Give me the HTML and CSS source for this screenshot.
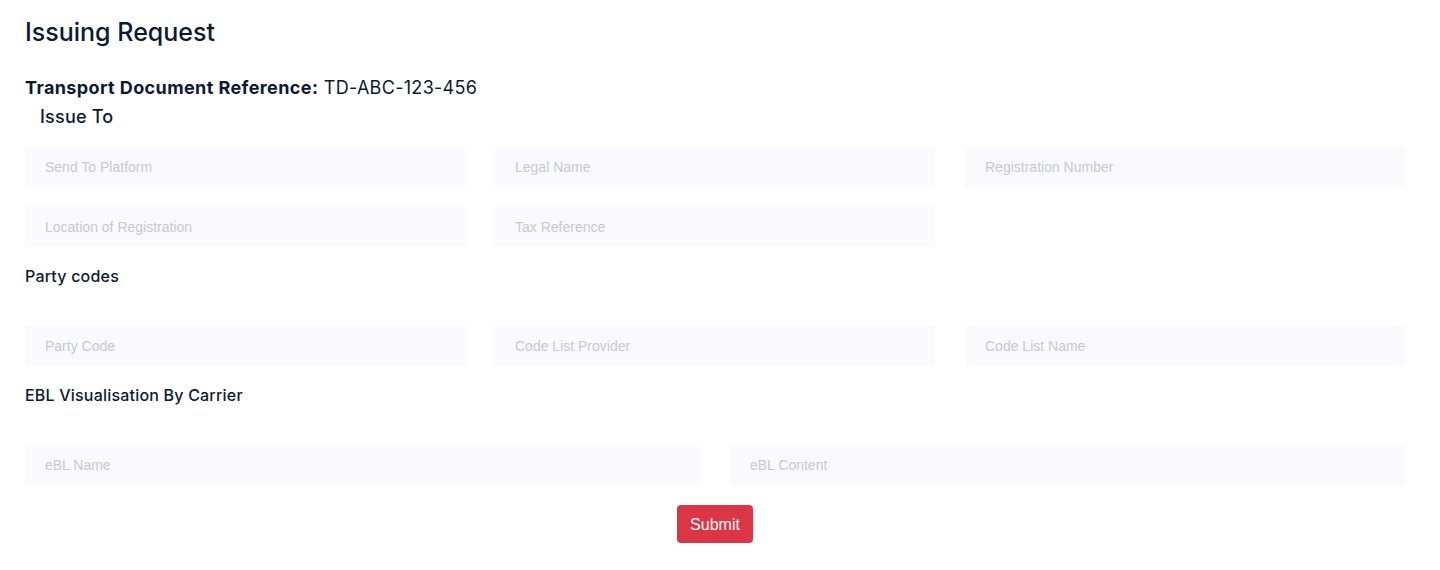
FILE: index.html
```html
<!DOCTYPE html>
<html lang="en">
<head>
<meta charset="utf-8">
<title>Issuing Request</title>
<link rel="stylesheet" href="styles.css">
</head>
<body>
<main class="page">
  <h1 class="title">Issuing Request</h1>
  <p class="ref"><strong>Transport Document Reference:</strong> TD-ABC-123-456</p>
  <h2 class="issue-to">Issue To</h2>
  <div class="grid three">
    <input class="field" placeholder="Send To Platform">
    <input class="field" placeholder="Legal Name">
    <input class="field" placeholder="Registration Number">
    <input class="field" placeholder="Location of Registration">
    <input class="field" placeholder="Tax Reference">
  </div>
  <h3 class="section">Party codes</h3>
  <div class="grid three spaced">
    <input class="field" placeholder="Party Code">
    <input class="field" placeholder="Code List Provider">
    <input class="field" placeholder="Code List Name">
  </div>
  <h3 class="section">EBL Visualisation By Carrier</h3>
  <div class="grid two spaced">
    <input class="field" placeholder="eBL Name">
    <input class="field" placeholder="eBL Content">
  </div>
  <div class="actions">
    <button class="btn-submit" type="button">Submit</button>
  </div>
</main>
</body>
</html>
```
FILE: styles.css
```css
* { box-sizing: border-box; }
html, body { margin: 0; background: #fff; }
body {
  font-family: "Inter", "Noto Sans", sans-serif;
  color: #0b1a33;
}
.page {
  padding: 16px 35px 0 25px;
}
.title {
  margin: 0;
  font-size: 25px;
  line-height: 32px;
  font-weight: 500;
}
.ref {
  margin: 28px 0 0;
  font-size: 18px;
  line-height: 24px;
  font-weight: 400;
  letter-spacing: 0.3px;
}
.ref strong { font-weight: 700; letter-spacing: 0.4px; }
.issue-to {
  margin: 5px 0 0;
  padding-left: 15px;
  font-size: 18px;
  line-height: 24px;
  font-weight: 500;
  letter-spacing: 0.2px;
}
.grid {
  display: grid;
  column-gap: 30px;
  row-gap: 20px;
  margin-top: 18px;
}
.grid.three { grid-template-columns: repeat(3, 1fr); }
.grid.two { grid-template-columns: repeat(2, 1fr); }
.grid.spaced { margin-top: 38px; }
.field {
  height: 40px;
  border: 0;
  outline: none;
  background: #f9f9fe;
  padding: 0 20px;
  font-family: "Liberation Sans", Arial, sans-serif;
  font-size: 14px;
  color: #333;
}
.field::placeholder { color: #c9c9cf; }
.section {
  margin: 17px 0 0;
  font-size: 16px;
  line-height: 24px;
  font-weight: 500;
  letter-spacing: 0.2px;
}
.actions {
  display: flex;
  justify-content: center;
  margin-top: 20px;
}
.btn-submit {
  height: 38px;
  padding: 0 13px;
  border: 0;
  border-radius: 4px;
  background: #dc3545;
  color: #fff;
  font-family: "Liberation Sans", Arial, sans-serif;
  font-size: 16px;
  line-height: 38px;
  padding-top: 1px;
}
```
